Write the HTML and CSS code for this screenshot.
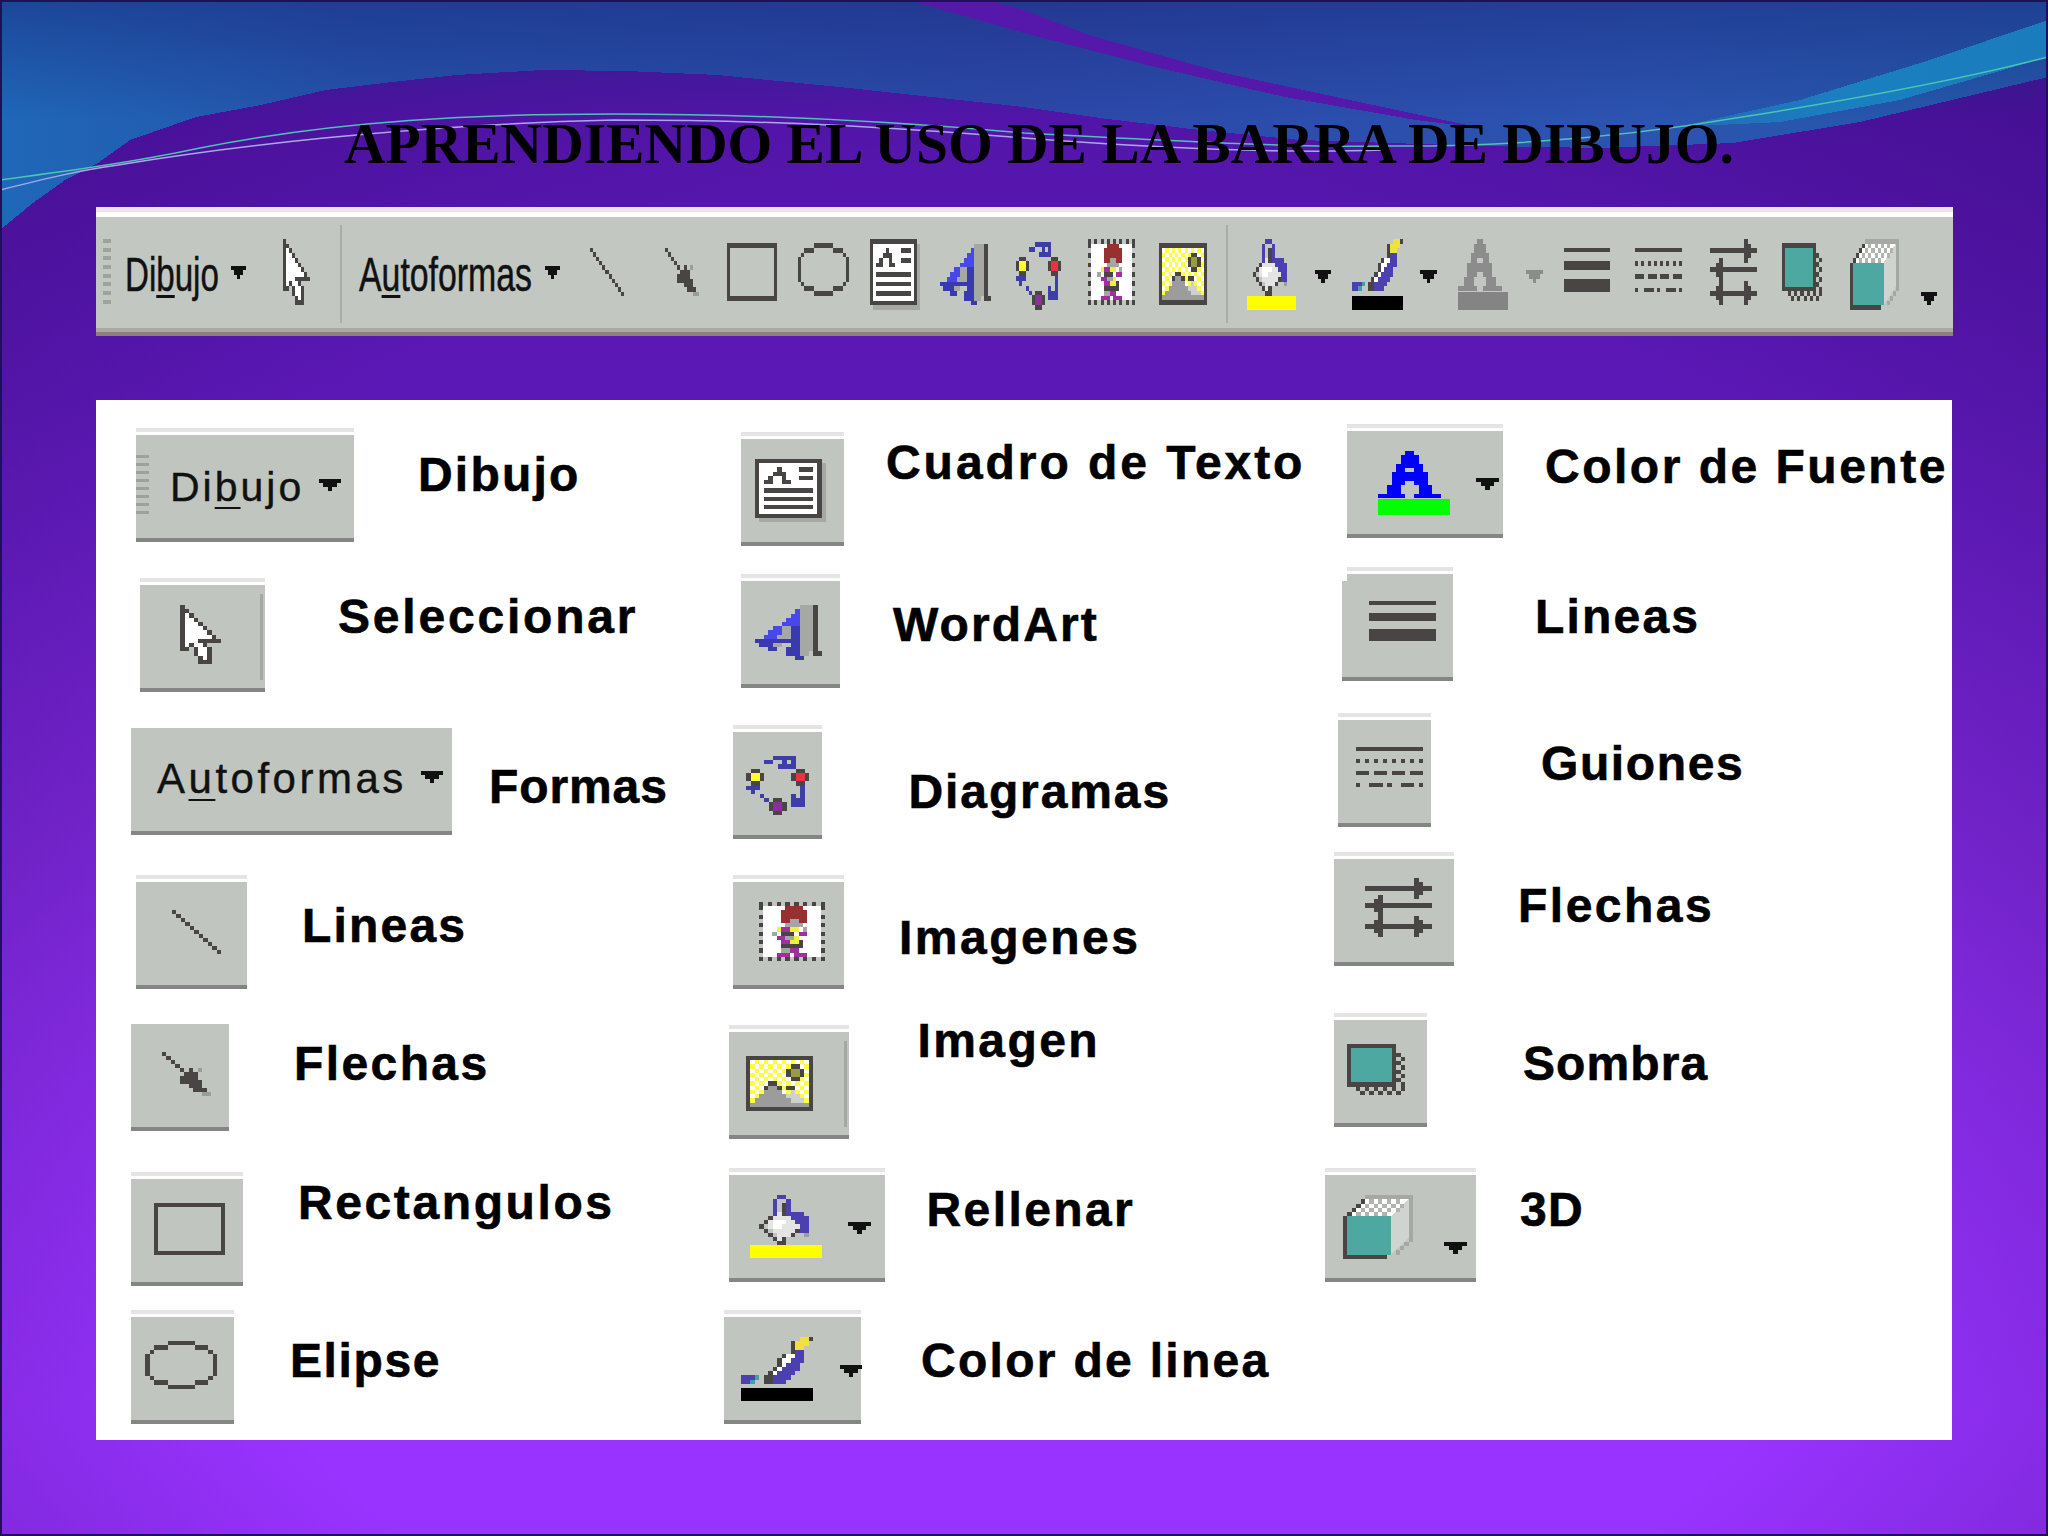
FILE: index.html
```html
<!DOCTYPE html>
<html lang="es">
<head>
    <meta charset="UTF-8">
    <title>Aprendiendo el uso de la barra de dibujo</title>
    <link rel="stylesheet" href="styles.css">
</head>
<body>
<svg class="sprite" aria-hidden="true">
    <symbol id="i-drop" viewBox="0 0 5 3" preserveAspectRatio="none">
        <path stroke="currentColor" d="M0 .5h5M1 1.5h3M2 2.5h1"/>
    </symbol>
    <symbol id="i-cursor" viewBox="0 0 9 14" preserveAspectRatio="none">
        <path stroke="#fff" d="M1 2.5h1M1 3.5h2M1 4.5h3M1 5.5h4M1 6.5h5M1 7.5h6M1 8.5h3M1 9.5h1M3 9.5h2M4 10.5h2M4 11.5h2M5 12.5h1"/>
        <path stroke="#4a4545" d="M.5 0v11M1 1.5h1M2 2.5h1M3 3.5h1M4 4.5h1M5 5.5h1M6 6.5h1M7 7.5h1M4 8.5h5M2 9.5h1M5 9.5h1M1 10.5h1M3 10.5h1M6 10.5h1M3 11.5h1M6 11.5h1M4 12.5h1M6 12.5h1M4 13.5h3"/>
    </symbol>
    <symbol id="i-line" viewBox="0 0 11 11" preserveAspectRatio="none">
        <path stroke="#4a4545" d="M0 .5h1M1 1.5h1M2 2.5h1M3 3.5h1M4 4.5h1M5 5.5h1M6 6.5h1M7 7.5h1M8 8.5h1M9 9.5h1M10 10.5h1"/>
    </symbol>
    <symbol id="i-arrow" viewBox="0 0 11 11" preserveAspectRatio="none">
        <path stroke="#4a4545" d="M0 .5h1M1 1.5h1M2 2.5h1M3 3.5h1M4 4.5h1M6 4.5h1M5 5.5h3M4 6.5h4M4 7.5h5M6 8.5h3M7 9.5h3"/>
        <path stroke="#9a9d98" d="M9 10.5h2M8 4.5h1"/>
    </symbol>
    <symbol id="i-rect" viewBox="0 0 16 12" preserveAspectRatio="none">
        <path stroke="#4a4545" fill="none" d="M.5 .5h15v11h-15z"/>
    </symbol>
    <symbol id="i-ellipse" viewBox="0 0 16 11" preserveAspectRatio="none">
        <path stroke="#4a4545" d="M5 .5h6M2 1.5h3M11 1.5h3M1 2.5h1M14 2.5h1M.5 3v5M15.5 3v5M1 8.5h1M14 8.5h1M2 9.5h3M11 9.5h3M5 10.5h6"/>
    </symbol>
    <symbol id="i-textbox" viewBox="0 0 16 15" preserveAspectRatio="none">
        <rect x="1" y="1" width="15" height="14" fill="#a5a8a3"/>
        <rect x=".5" y=".5" width="14" height="13" fill="#fff" stroke="#4a4545"/>
        <path stroke="#4a4545" d="M5 2.5h1M4 3.5h3M3 4.5h1M6 4.5h1M2 5.5h2M6 5.5h2M10 2.5h3M10 4.5h3M2 7.5h11M2 9.5h11M2 11.5h11"/>
    </symbol>
    <symbol id="i-wordart" viewBox="0 0 15 15" preserveAspectRatio="none">
        <path stroke="#a5a8a3" d="M10 1.5h3M10 2.5h3M10 3.5h3M10 4.5h3M10 5.5h3M6 6.5h7M6 7.5h7M5 8.5h8M10 9.5h3M4 10.5h2M10 10.5h3M10 11.5h3M10 12.5h2M10 13.5h1"/>
        <path stroke="#4a4545" d="M13.5 1v12M14 12.5h1"/>
        <path stroke="#4848ea" d="M9 2.5h1M8 3.5h2M7 4.5h3M6 5.5h4M4 6.5h2M3 7.5h3M2 8.5h3"/>
        <path stroke="#3a3ab0" d="M8 6.5h2M8 7.5h2M8 8.5h2M0 9.5h10M1 10.5h3M8 10.5h2M3 11.5h2M7 11.5h3M7 12.5h3M9 13.5h2"/>
    </symbol>
    <symbol id="i-diagram" viewBox="0 0 14 14" preserveAspectRatio="none">
        <path stroke="#3e3ea8" d="M4 1.5h2M6 .5h4M10.5 0v3M7 2.5h3M8 1.5h1M12.5 7v5M10 11.5h3M10 10.5h2M10.5 9v2M0 7.5h3M1.5 6v3M3 9.5h1M4 10.5h1"/>
        <path stroke="#4a4545" d="M1 3.5h2M0 4.5h4M0 5.5h4M1 6.5h2M11 3.5h2M10 4.5h4M10 5.5h4M11 6.5h2M6 10.5h2M5 11.5h4M5 12.5h4M6 13.5h2"/>
        <path stroke="#ffff30" d="M1 4.5h2M1 5.5h2"/>
        <path stroke="#f03040" d="M11 4.5h2M11 5.5h2"/>
        <path stroke="#8a3098" d="M6 11.5h2M6 12.5h2"/>
    </symbol>
    <symbol id="i-clipart" viewBox="0 0 15 14" preserveAspectRatio="none">
        <rect x="1" y="1" width="13" height="12" fill="#fff"/>
        <path stroke="#4a4545" stroke-dasharray="1" d="M0 .5h15M0 13.5h15M.5 1v13M14.5 1v13"/>
        <path stroke="#983030" d="M6 1.5h4M5 2.5h6M5 3.5h6M5 4.5h2M9 4.5h2"/>
        <path stroke="#a5a5a5" d="M7 4.5h2M6 5.5h4M3 7.5h1M10 6.5h1M6 8.5h2M5 11.5h4"/>
        <path stroke="#f0f040" d="M4 6.5h1M7 6.5h2M8 8.5h1M7 9.5h2"/>
        <path stroke="#a030a0" d="M5 6.5h2M9 7.5h2M4 8.5h2M5 9.5h2M4 12.5h3M8 12.5h3M7 11.5h2"/>
        <path stroke="#4a4545" d="M5 7.5h3M9 9.5h1M5 10.5h5"/>
    </symbol>
    <symbol id="i-picture" viewBox="0 0 15 13" preserveAspectRatio="none">
        <rect x="1" y="1" width="13" height="11" fill="#ffff40"/>
        <path stroke="#fff" stroke-dasharray="1" d="M1 1.5h13M2 2.5h12M1 3.5h13M2 4.5h12M1 5.5h13M2 6.5h12M1 7.5h13M2 8.5h12M1 9.5h13"/>
        <path stroke="#4a4545" fill="none" d="M.5 .5h14v12h-14z"/>
        <path stroke="#4a4545" d="M10 2.5h2M9 3.5h1M12 3.5h1M9 4.5h1M12 4.5h1M10 5.5h2M5 6.5h2M4 7.5h1M7 7.5h1M9 7.5h2"/>
        <path stroke="#9a9a40" d="M10 3.5h2M10 4.5h2"/>
        <path stroke="#9c9c9c" d="M5 7.5h2M4 8.5h4M3 9.5h6M2 10.5h8M1 11.5h13"/>
        <path stroke="#d0d0d0" d="M10 8.5h1M9 9.5h3M10 10.5h3"/>
    </symbol>
    <symbol id="i-fill" viewBox="0 0 16 15" preserveAspectRatio="none">
        <rect y="12" width="16" height="3" fill="#ff0"/>
        <path stroke="#e4e4e4" d="M6 4.5h3M5 5.5h5M4 6.5h7M4 7.5h7M5 8.5h5M6 9.5h3M6 10.5h1"/>
        <path stroke="#fff" d="M5 6.5h3M5 7.5h2"/>
        <path stroke="#4a4545" d="M7.5 2v3M4 5.5h1M3 6.5h1M2 7.5h1M3 8.5h1M4 9.5h1M5 10.5h1M7 10.5h1M9 9.5h1M10 8.5h1M11 7.5h1M6 11.5h2"/>
        <path stroke="#4c40b0" d="M5.5 1v4M6 .5h2M8.5 1v4M9 4.5h3M9 5.5h4M10 6.5h3M11 7.5h2M11 8.5h2"/>
        <path stroke="#9a9d98" d="M12 9.5h1"/>
    </symbol>
    <symbol id="i-pen" viewBox="0 0 16 15" preserveAspectRatio="none">
        <rect y="12" width="16" height="3" fill="#000"/>
        <path stroke="#f0e040" d="M13 .5h2M12 1.5h3M12 2.5h2"/>
        <path stroke="#4a4545" d="M15 .5h1M11 1.5h1M11 2.5h1M11 3.5h1M9 4.5h1M8 5.5h1M8 6.5h1M7 7.5h1M6 8.5h1M5 9.5h2M5 10.5h2"/>
        <path stroke="#fff" d="M10 4.5h2M9 5.5h2M9 6.5h1M8 7.5h1M7 8.5h1"/>
        <path stroke="#4c40b0" d="M12 3.5h2M12 4.5h2M11 5.5h3M10 6.5h3M9 7.5h4M8 8.5h4M7 9.5h4M7 10.5h3M0 9.5h3M0 10.5h2"/>
        <path stroke="#40a0a8" d="M3 9.5h1M2 10.5h1"/>
    </symbol>
    <symbol id="i-font" viewBox="0 0 16 15" preserveAspectRatio="none">
        <rect class="font-bar" y="11.3" width="16" height="3.7"/>
        <path stroke="currentColor" d="M6 .5h2M5 1.5h4M5 2.5h4M4 3.5h6M4 4.5h2M8 4.5h2M3 5.5h8M3 6.5h8M3 7.5h3M8 7.5h3M2 8.5h3M9 8.5h3M2 9.5h3M9 9.5h3M0 10.5h6M8 10.5h6"/>
    </symbol>
    <symbol id="i-weights" viewBox="0 0 15 10" preserveAspectRatio="none">
        <path fill="#4a4545" d="M0 0h15v1H0zM0 3h15v2H0zM0 7h15v3H0z"/>
    </symbol>
    <symbol id="i-dashes" viewBox="0 0 15 10" preserveAspectRatio="none">
        <path fill="#4a4545" d="M0 0h15v1H0z"/>
        <path stroke="#4a4545" stroke-dasharray="1" d="M0 3.5h15"/>
        <path stroke="#4a4545" stroke-dasharray="3 1" d="M0 6.5h15"/>
        <path stroke="#4a4545" d="M0 9.5h1M3 9.5h3M7 9.5h1M10 9.5h3M14 9.5h1"/>
    </symbol>
    <symbol id="i-arrows" viewBox="0 0 15 14" preserveAspectRatio="none">
        <path stroke="#4a4545" d="M0 2.5h14M11.5 0v5M12.5 1v3M14 2.5h1M1 6.5h14M3.5 4v5M2.5 5v3M0 6.5h1M2 11.5h11M3.5 9v5M2.5 10v3M0 11.5h2M11.5 9v5M12.5 10v3M13 11.5h2"/>
    </symbol>
    <symbol id="i-shadow" viewBox="0 0 13 12" preserveAspectRatio="none">
        <rect x=".5" y=".5" width="10" height="9" fill="#4ca8a0" stroke="#4a4545"/>
        <path stroke="#4a4545" stroke-dasharray="1" d="M11 2.5h2M12 3.5h1M11 4.5h2M12 5.5h1M11 6.5h2M12 7.5h1M11 8.5h2M12 9.5h1M2 10.5h11M3 11.5h10"/>
    </symbol>
    <symbol id="i-cube" viewBox="0 0 16 15" preserveAspectRatio="none">
        <path fill="#d0d4d0" d="M11 5l4-4v9l-4 4z"/>
        <path fill="#fff" d="M1 5l4-4h10l-4 4z"/>
        <path stroke="#b0b3ae" stroke-dasharray="1" d="M6 1.5h8M5 2.5h9M4 3.5h9M3 4.5h8"/>
        <path stroke="#a5a8a3" d="M5 .5h11M15.5 1v10M14 11.5h1M13 12.5h1M12 13.5h1"/>
        <path stroke="#4a4545" d="M4 1.5h1M3 2.5h1M2 3.5h1M1 4.5h1M.5 5v10M1 14.5h9"/>
        <rect x="1" y="5" width="10" height="9" fill="#4ca8a0"/>
    </symbol>
</svg>

<main class="slide">
    <svg class="backdrop" viewBox="0 0 2048 1536" aria-hidden="true">
        <defs>
            <linearGradient id="blue-fill" gradientUnits="userSpaceOnUse" x1="0" y1="220" x2="2048" y2="0">
                <stop offset="0" stop-color="#1f68b8"/>
                <stop offset=".18" stop-color="#2552aa"/>
                <stop offset=".5" stop-color="#2c48a8"/>
                <stop offset=".8" stop-color="#2b54b0"/>
                <stop offset="1" stop-color="#2358a8"/>
            </linearGradient>
            <linearGradient id="top-shade" x1="0" y1="0" x2="0" y2="1">
                <stop offset="0" stop-color="#1a2c80" stop-opacity=".55"/>
                <stop offset="1" stop-color="#1a2c80" stop-opacity="0"/>
            </linearGradient>
            <linearGradient id="teal-fill" x1="0" y1="0" x2="1" y2="0">
                <stop offset="0" stop-color="#2668b8"/>
                <stop offset=".45" stop-color="#1a80c0"/>
                <stop offset="1" stop-color="#1a7cbc"/>
            </linearGradient>
        </defs>
        <path fill="url(#blue-fill)" d="M0 230L33 203L65 180L98 163L130 140L196 117L261 105L326 90L392 82L457 75L542 70L627 71L718 75L849 88L1024 107L1100 118L1200 130L1300 140L1481 146L1600 148L1733 143L1860 122L2048 77V0H0Z"/>
        <rect width="2048" height="120" fill="url(#top-shade)"/>
        <path fill="#5518aa" d="M908 0H986L1024 10L1089 35L1220 72L1350 100L1481 128L1416 120L1285 97L1155 67L1024 33Z"/>
        <path fill="url(#teal-fill)" d="M2048 20V57L1900 100L1780 122L1677 127L1800 100L1930 60Z"/>
        <g class="backdrop-lines" fill="none" stroke-width="1.5">
            <path stroke="#4cc4b4" d="M0 180C60 172 130 163 200 148C340 120 480 114 614 114C760 114 900 122 1024 133C1160 140 1300 148 1383 146C1500 147 1620 138 1742 117C1850 100 1960 80 2048 57"/>
            <path stroke="#a8a8e8" d="M0 190C40 180 80 170 118 165C220 148 400 125 614 120C780 120 900 128 1024 138C1180 150 1300 153 1383 150"/>
        </g>
        <rect x="1" y="1" width="2046" height="1534" fill="none" stroke="#20105a" stroke-width="2"/>
    </svg>

    <h1 class="title">APRENDIENDO EL USO DE LA BARRA DE DIBUJO.</h1>

    <div class="toolbar">
        <i class="grip tb-grip"></i>
        <span class="tb-text tb-dibujo">Di<u>b</u>ujo</span>
        <svg class="tb-drop d1"><use href="#i-drop"/></svg>
        <svg class="tb-cursor"><use href="#i-cursor"/></svg>
        <i class="tb-sep s1"></i>
        <span class="tb-text tb-auto">A<u>u</u>toformas</span>
        <svg class="tb-drop d2"><use href="#i-drop"/></svg>
        <svg class="tb-line"><use href="#i-line"/></svg>
        <svg class="tb-arrow"><use href="#i-arrow"/></svg>
        <svg class="tb-rect"><use href="#i-rect"/></svg>
        <svg class="tb-ellipse"><use href="#i-ellipse"/></svg>
        <svg class="tb-textbox"><use href="#i-textbox"/></svg>
        <svg class="tb-wordart"><use href="#i-wordart"/></svg>
        <svg class="tb-diagram"><use href="#i-diagram"/></svg>
        <svg class="tb-clipart"><use href="#i-clipart"/></svg>
        <svg class="tb-picture"><use href="#i-picture"/></svg>
        <i class="tb-sep s2"></i>
        <svg class="tb-fill"><use href="#i-fill"/></svg>
        <svg class="tb-drop d3"><use href="#i-drop"/></svg>
        <svg class="tb-pen"><use href="#i-pen"/></svg>
        <svg class="tb-drop d4"><use href="#i-drop"/></svg>
        <svg class="tb-font"><use href="#i-font"/></svg>
        <svg class="tb-drop d5"><use href="#i-drop"/></svg>
        <svg class="tb-weights"><use href="#i-weights"/></svg>
        <svg class="tb-dashes"><use href="#i-dashes"/></svg>
        <svg class="tb-arrows"><use href="#i-arrows"/></svg>
        <svg class="tb-shadow"><use href="#i-shadow"/></svg>
        <svg class="tb-cube"><use href="#i-cube"/></svg>
        <svg class="tb-drop d6"><use href="#i-drop"/></svg>
    </div>

    <section class="panel">
        <div class="col">
            <div class="row r-dibujo">
                <div class="tile w218"><i class="grip tile-grip"></i><span class="tile-text tt-dibujo">Di<u>b</u>ujo</span><svg class="drop dp-dibujo"><use href="#i-drop"/></svg></div>
                <span class="label lb-dibujo">Dibujo</span>
            </div>
            <div class="row r-select">
                <div class="tile w125"><svg class="ti-cursor"><use href="#i-cursor"/></svg><i class="tile-edge"></i></div>
                <span class="label lb-select">Seleccionar</span>
            </div>
            <div class="row r-auto">
                <div class="tile w321 flat"><span class="tile-text tt-auto">A<u>u</u>toformas</span><svg class="drop dp-auto"><use href="#i-drop"/></svg></div>
                <span class="label lb-auto">Formas</span>
            </div>
            <div class="row r-line">
                <div class="tile w111"><svg class="ti-line"><use href="#i-line"/></svg></div>
                <span class="label lb-line">Lineas</span>
            </div>
            <div class="row r-arrow">
                <div class="tile w98 flat"><svg class="ti-arrow"><use href="#i-arrow"/></svg></div>
                <span class="label lb-arrow">Flechas</span>
            </div>
            <div class="row r-rect">
                <div class="tile w112"><svg class="ti-rect"><use href="#i-rect"/></svg></div>
                <span class="label lb-rect">Rectangulos</span>
            </div>
            <div class="row r-ellipse">
                <div class="tile w103"><svg class="ti-ellipse"><use href="#i-ellipse"/></svg></div>
                <span class="label lb-ellipse">Elipse</span>
            </div>
        </div>

        <div class="col">
            <div class="row r-textbox">
                <div class="tile w103"><svg class="ti-textbox"><use href="#i-textbox"/></svg></div>
                <span class="label lb-textbox">Cuadro de Texto</span>
            </div>
            <div class="row r-wordart">
                <div class="tile w99"><svg class="ti-wordart"><use href="#i-wordart"/></svg></div>
                <span class="label lb-wordart">WordArt</span>
            </div>
            <div class="row r-diagram">
                <div class="tile w88"><svg class="ti-diagram"><use href="#i-diagram"/></svg></div>
                <span class="label lb-diagram">Diagramas</span>
            </div>
            <div class="row r-clipart">
                <div class="tile w111"><svg class="ti-clipart"><use href="#i-clipart"/></svg></div>
                <span class="label lb-clipart">Imagenes</span>
            </div>
            <div class="row r-picture">
                <div class="tile w119"><svg class="ti-picture"><use href="#i-picture"/></svg><i class="tile-edge"></i></div>
                <span class="label lb-picture">Imagen</span>
            </div>
            <div class="row r-fill">
                <div class="tile w155"><svg class="ti-fill"><use href="#i-fill"/></svg><svg class="drop dp-fill"><use href="#i-drop"/></svg></div>
                <span class="label lb-fill">Rellenar</span>
            </div>
            <div class="row r-pen">
                <div class="tile w137"><svg class="ti-pen"><use href="#i-pen"/></svg><svg class="drop dp-pen"><use href="#i-drop"/></svg></div>
                <span class="label lb-pen">Color de linea</span>
            </div>
        </div>

        <div class="col">
            <div class="row r-font">
                <div class="tile w156"><svg class="ti-font"><use href="#i-font"/></svg><svg class="drop dp-font"><use href="#i-drop"/></svg></div>
                <span class="label lb-font">Color de Fuente</span>
            </div>
            <div class="row r-weights">
                <div class="tile w111 notched"><svg class="ti-weights"><use href="#i-weights"/></svg></div>
                <span class="label lb-weights">Lineas</span>
            </div>
            <div class="row r-dashes">
                <div class="tile w93"><svg class="ti-dashes"><use href="#i-dashes"/></svg></div>
                <span class="label lb-dashes">Guiones</span>
            </div>
            <div class="row r-arrows">
                <div class="tile w120"><svg class="ti-arrows"><use href="#i-arrows"/></svg></div>
                <span class="label lb-arrows">Flechas</span>
            </div>
            <div class="row r-shadow">
                <div class="tile w93"><svg class="ti-shadow"><use href="#i-shadow"/></svg></div>
                <span class="label lb-shadow">Sombra</span>
            </div>
            <div class="row r-cube">
                <div class="tile w151"><svg class="ti-cube"><use href="#i-cube"/></svg><svg class="drop dp-cube"><use href="#i-drop"/></svg></div>
                <span class="label lb-cube">3D</span>
            </div>
        </div>
    </section>
</main>
</body>
</html>
```

FILE: styles.css
```css
* {
    box-sizing: border-box;
}

body {
    margin: 0;
    background: #9933ff;
}

svg {
    display: block;
    flex: none;
    shape-rendering: crispEdges;
    color: #111;
}

i {
    display: block;
    flex: none;
}

.sprite {
    position: absolute;
    width: 0;
    height: 0;
}

.font-bar {
    fill: var(--bar);
}

/* slide */
.slide {
    position: relative;
    width: 2048px;
    height: 1536px;
    padding-top: 115px;
    overflow: hidden;
    background:
        radial-gradient(ellipse 75% 85% at 50% 62%, rgba(40, 5, 100, 0) 60%, rgba(40, 5, 100, .4) 100%),
        linear-gradient(#5014a6 0, #5c18b6 25%, #7424cc 55%, #9933ff 92%);
}

.backdrop {
    position: absolute;
    top: 0;
    left: 0;
    width: 2048px;
    height: 1536px;
}

.backdrop-lines {
    shape-rendering: geometricPrecision;
}

.title {
    position: relative;
    margin: 0;
    padding-left: 30px;
    font: bold 57.5px/57px "Liberation Serif", serif;
    color: #000;
    text-align: center;
}

/* top toolbar */
.toolbar {
    position: relative;
    display: flex;
    align-items: flex-start;
    width: 1857px;
    height: 129px;
    margin: 35px 0 0 96px;
    padding-top: 5px;
    border-top: 5px solid #efe3ea;
    border-bottom: 4px solid #8c807f;
    background: linear-gradient(#fff 5px, #c2c7c1 5px, #c2c7c1 calc(100% - 4px), #aaa9a6 calc(100% - 4px));
}

.grip {
    background: repeating-linear-gradient(#9da29b 0, #9da29b 4px, transparent 4px, transparent 8.7px);
}

.tb-grip { width: 8.5px; height: 66px; margin: 22px 0 0 6.5px; }

.tb-text {
    flex: none;
    font: 48px/48px "Liberation Sans", sans-serif;
    color: #111;
    -webkit-text-stroke: .5px #111;
    white-space: nowrap;
    transform-origin: 0 0;
    margin-top: 34px;
}

.tb-text u {
    text-decoration-thickness: 3px;
    text-underline-offset: 4px;
}

.tb-dibujo { width: 94px; margin-left: 13.5px; transform: scaleX(.69); }
.tb-auto { width: 173px; margin-left: 17px; transform: scaleX(.705); }

.tb-drop { margin-top: 49px; height: 13px; }
.d1 { width: 15px; margin-left: 12px; }
.d2 { width: 15px; margin-left: 13px; }
.d3 { width: 16px; margin: 53px 0 0 19px; }
.d4 { width: 17px; margin: 53px 0 0 17px; }
.d5 { width: 17px; margin: 53px 0 0 18px; color: #8c8c8c; }
.d6 { width: 16px; margin: 75px 0 0 22px; }

.tb-sep {
    width: 2px;
    height: 98px;
    margin-top: 8px;
    background: #a9aca7;
}

.s1 { margin-left: 30px; }
.s2 { margin-left: 19px; }

.tb-cursor { width: 27px; height: 66px; margin: 22px 0 0 37px; }
.tb-line { width: 34px; height: 48px; margin: 31px 0 0 30px; }
.tb-arrow { width: 34px; height: 48px; margin: 31px 0 0 41px; }
.tb-rect { width: 50px; height: 58px; margin: 26px 0 0 28px; }
.tb-ellipse { width: 51px; height: 53px; margin: 26px 0 0 21px; }
.tb-textbox { width: 50px; height: 71px; margin: 22px 0 0 21px; }
.tb-wordart { width: 51px; height: 71px; margin: 22px 0 0 20px; }
.tb-diagram { width: 45px; height: 68px; margin: 25px 0 0 25px; }
.tb-clipart { width: 47px; height: 66px; margin: 22px 0 0 27px; }
.tb-picture { width: 48px; height: 62px; margin: 26px 0 0 24px; }
.tb-fill { width: 49px; height: 71px; margin: 22px 0 0 19px; }
.tb-pen { width: 51px; height: 71px; margin: 22px 0 0 21px; }
.tb-font { width: 50px; height: 71px; margin: 22px 0 0 21px; color: #8c8c8c; --bar: #848484; }
.tb-weights { width: 46px; height: 44px; margin: 31px 0 0 21px; }
.tb-dashes { width: 47px; height: 44px; margin: 31px 0 0 25px; }
.tb-arrows { width: 47px; height: 66px; margin: 22px 0 0 28px; }
.tb-shadow { width: 40px; height: 58px; margin: 26px 0 0 25px; }
.tb-cube { width: 49px; height: 71px; margin: 22px 0 0 28px; }

/* white panel with the legend */
.panel {
    position: relative;
    display: grid;
    grid-template-columns: 628px 596px 1fr;
    width: 1856px;
    height: 1040px;
    margin: 64px 0 0 96px;
    background: #fff;
}

.row {
    display: flex;
    align-items: flex-start;
}

.tile {
    position: relative;
    display: flex;
    align-items: flex-start;
    flex: none;
    height: 107px;
    border-bottom: 4px solid #838683;
    background: #c0c5bf;
    box-shadow: 0 -3px 0 #fff, 0 -7px 0 #e4e4e4;
}

.flat { box-shadow: none; }

.notched::before {
    content: "";
    position: absolute;
    top: -8px;
    left: 0;
    width: 5px;
    height: 15px;
    background: #fff;
}

.w88 { width: 88.5px; }
.w93 { width: 93px; }
.w98 { width: 98px; }
.w99 { width: 99px; }
.w103 { width: 103px; }
.w111 { width: 111px; }
.w112 { width: 112px; }
.w119 { width: 119.5px; }
.w120 { width: 120px; }
.w125 { width: 125px; }
.w137 { width: 137px; }
.w151 { width: 151px; }
.w155 { width: 155.5px; }
.w156 { width: 156px; }
.w218 { width: 218px; }
.w321 { width: 321px; }

.tile-grip {
    width: 13px;
    height: 60px;
    margin-top: 20px;
    background: repeating-linear-gradient(#9da29b 0, #9da29b 3px, transparent 3px, transparent 8px);
}

.tile-text {
    flex: none;
    font-family: "Liberation Sans", sans-serif;
    color: #111;
    -webkit-text-stroke: .4px #111;
    letter-spacing: 3px;
    white-space: nowrap;
}

.tile-text u {
    text-decoration-thickness: 2px;
    text-underline-offset: 6px;
}

.tt-dibujo { width: 131px; margin: 32px 0 0 21px; font-size: 41px; line-height: 41px; }
.tt-auto { width: 246px; margin: 30px 0 0 26px; font-size: 42px; line-height: 42px; letter-spacing: 3.5px; }

.tile-edge {
    width: 3px;
    height: 86px;
    margin: 9px 2px 0 auto;
    background: #a5a8a3;
}

.drop { height: 12px; }
.dp-dibujo { width: 22px; margin: 44px 0 0 18px; }
.dp-auto { width: 22px; margin: 43px 0 0 18px; }
.dp-fill { width: 23px; margin: 47px 0 0 26px; }
.dp-pen { width: 22px; margin: 48px 0 0 27px; }
.dp-font { width: 23px; margin: 47px 0 0 26px; }
.dp-cube { width: 23px; margin: 67px 0 0 31px; }

.ti-cursor { width: 41px; height: 59px; margin: 20px 0 0 40px; }
.ti-line { width: 49px; height: 44px; margin: 28px 0 0 36px; }
.ti-arrow { width: 49px; height: 44px; margin: 28px 0 0 31px; }
.ti-rect { width: 71px; height: 52px; margin: 24px 0 0 23px; }
.ti-ellipse { width: 72px; height: 48px; margin: 24px 0 0 14px; }
.ti-textbox { width: 71px; height: 63px; margin: 20px 0 0 14px; }
.ti-wordart { width: 67px; height: 63px; margin: 20px 0 0 14px; }
.ti-diagram { width: 63px; height: 59px; margin: 24px 0 0 13px; }
.ti-clipart { width: 66px; height: 59px; margin: 20px 0 0 26px; }
.ti-picture { width: 67px; height: 55px; margin: 24px 0 0 17px; }
.ti-fill { width: 72px; height: 63px; margin: 20px 0 0 21px; }
.ti-pen { width: 72px; height: 64px; margin: 20px 0 0 17px; }
.ti-font { width: 72px; height: 64px; margin: 20px 0 0 31px; color: #00f; --bar: #0f0; }
.ti-weights { width: 67px; height: 40px; margin: 27px 0 0 27px; }
.ti-dashes { width: 67px; height: 40px; margin: 27px 0 0 18px; }
.ti-arrows { width: 67px; height: 59px; margin: 19px 0 0 31px; }
.ti-shadow { width: 58px; height: 51px; margin: 24px 0 0 13px; }
.ti-cube { width: 70px; height: 64px; margin: 20px 0 0 18px; }

.label {
    flex: none;
    padding-top: 2px;
    font: bold 48px/48px "Liberation Sans", sans-serif;
    color: #000;
    -webkit-text-stroke: .6px #000;
    white-space: nowrap;
}

/* rows of the legend, first column */
.r-dibujo { margin: 35px 0 0 40px; }
.r-select { margin: 43px 0 0 44px; }
.r-auto { margin: 36px 0 0 35px; }
.r-line { margin: 47px 0 0 40px; }
.r-arrow { margin: 35px 0 0 35px; }
.r-rect { margin: 48px 0 0 35px; }
.r-ellipse { margin: 31px 0 0 35px; }

.lb-dibujo { margin: 14px 0 0 64px; letter-spacing: 2.2px; }
.lb-select { margin: 6px 0 0 73px; letter-spacing: 2.8px; }
.lb-auto { margin: 33px 0 0 37px; letter-spacing: .9px; }
.lb-line { margin: 18px 0 0 55px; letter-spacing: 2.2px; }
.lb-arrow { margin: 14px 0 0 65px; letter-spacing: 2.4px; }
.lb-rect { margin: -2px 0 0 55px; letter-spacing: 2.6px; }
.lb-ellipse { margin: 18px 0 0 56px; letter-spacing: 1.6px; }

/* second column */
.r-textbox { margin: 39px 0 0 17px; }
.r-wordart { margin: 35px 0 0 17px; }
.r-diagram { margin: 44px 0 0 9px; }
.r-clipart { margin: 43px 0 0 9px; }
.r-picture { margin: 43px 0 0 5px; }
.r-fill { margin: 36px 0 0 5px; }
.r-pen { margin: 35px 0 0 0; }

.lb-textbox { margin: -2px 0 0 42px; letter-spacing: 2.95px; }
.lb-wordart { margin: 18px 0 0 53px; letter-spacing: 2.1px; }
.lb-diagram { margin: 34px 0 0 87px; letter-spacing: 1.9px; }
.lb-clipart { margin: 30px 0 0 55px; letter-spacing: 2.5px; }
.lb-picture { margin: -17px 0 0 69px; letter-spacing: 2.4px; }
.lb-fill { margin: 9px 0 0 42px; letter-spacing: 2.4px; }
.lb-pen { margin: 18px 0 0 60px; letter-spacing: 2.3px; }

/* third column */
.r-font { margin: 31px 0 0 27px; }
.r-weights { margin: 36px 0 0 22px; }
.r-dashes { margin: 39px 0 0 18px; }
.r-arrows { margin: 32px 0 0 14px; }
.r-shadow { margin: 54px 0 0 14px; }
.r-cube { margin: 48px 0 0 5px; }

.lb-font { margin: 10px 0 0 42px; letter-spacing: 2.5px; }
.lb-weights { margin: 17px 0 0 82px; letter-spacing: 2.2px; }
.lb-dashes { margin: 18px 0 0 110px; letter-spacing: 1.6px; }
.lb-arrows { margin: 21px 0 0 64px; letter-spacing: 2.5px; }
.lb-shadow { margin: 18px 0 0 96px; letter-spacing: 1.1px; }
.lb-cube { margin: 9px 0 0 44px; letter-spacing: 1.4px; }
```
